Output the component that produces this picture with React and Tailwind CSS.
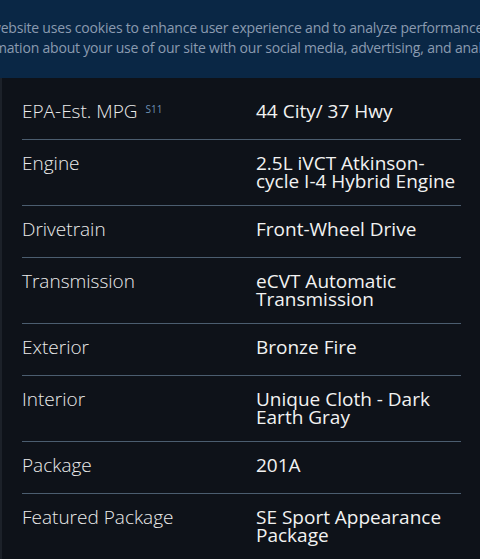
const specs = [
  { label: 'EPA-Est. MPG', sup: 'S11', value: ['44 City/ 37 Hwy'] },
  { label: 'Engine', value: ['2.5L iVCT Atkinson-', 'cycle I-4 Hybrid Engine'] },
  { label: 'Drivetrain', value: ['Front-Wheel Drive'] },
  { label: 'Transmission', value: ['eCVT Automatic', 'Transmission'] },
  { label: 'Exterior', value: ['Bronze Fire'] },
  { label: 'Interior', value: ['Unique Cloth - Dark', 'Earth Gray'] },
  { label: 'Package', value: ['201A'] },
  { label: 'Featured Package', value: ['SE Sport Appearance', 'Package'] },
];

export default function App() {
  return (
    <div className="h-[559px] w-[480px] overflow-hidden bg-[#0e1219] font-['Open_Sans',sans-serif]">
      {/* cookie banner */}
      <div className="h-[78px] overflow-hidden bg-[#0a2745] pt-[18px] text-[14px] leading-[20px] tracking-[-0.2px] text-[#8b9bb0]">
        <p className="-ml-[10px] whitespace-nowrap">
          website uses cookies to enhance user experience and to analyze performance and traffic on our website.
        </p>
        <p className="-ml-[36px] whitespace-nowrap">
          information about your use of our site with our social media, advertising, and analytics partners.
        </p>
      </div>

      <div className="border-l-2 border-[#1c2129] pl-[20px] pr-[19px] pt-[10px]">
        {specs.map((row, i) => (
          <div
            key={row.label}
            className={`flex pt-[14px] pb-[15px] ${i < specs.length - 1 ? 'border-b border-[#4b5d6f]' : ''}`}
          >
            <div className="w-[234px] shrink-0 pb-[4px] text-[19px] font-light leading-[18px] text-[#ebebeb]">
              {row.label}
              {row.sup && (
                <sup className="ml-[8px] text-[10px] font-normal text-[#6d90b3]">{row.sup}</sup>
              )}
            </div>
            <div className="text-[19px] leading-[18px] text-[#f2f2f2]">
              {row.value.map((line) => (
                <div key={line}>{line}</div>
              ))}
            </div>
          </div>
        ))}
      </div>
    </div>
  );
}
